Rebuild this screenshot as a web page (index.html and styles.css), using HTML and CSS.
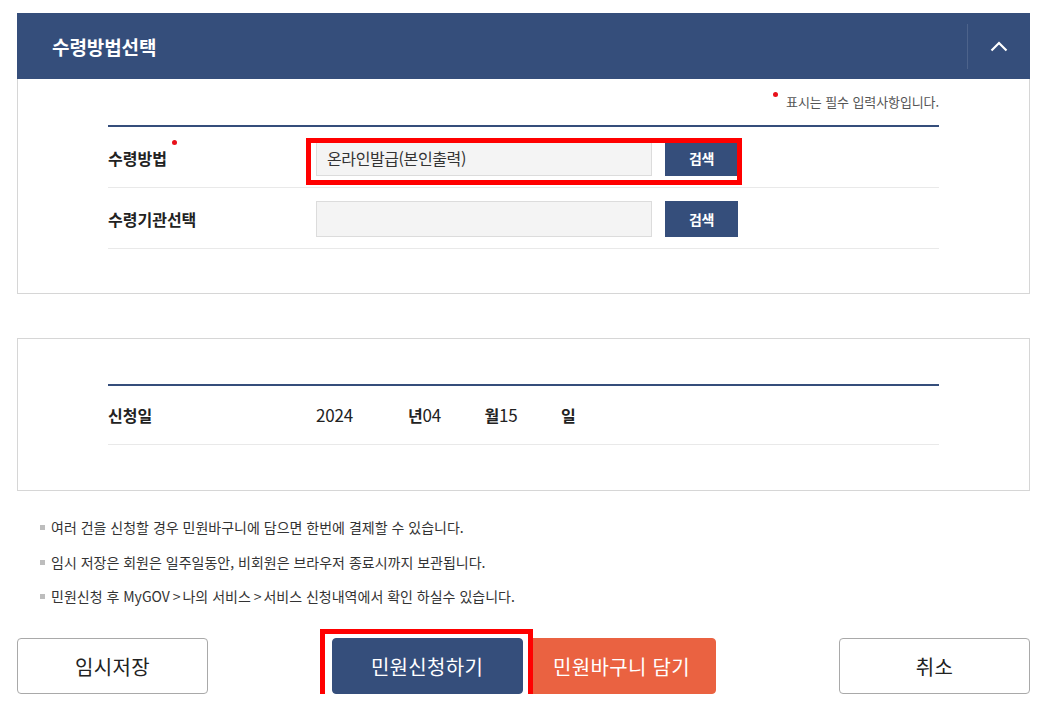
FILE: index.html
```html
<!DOCTYPE html>
<html lang="ko">
<head>
<meta charset="utf-8">
<title>수령방법선택</title>
<link rel="stylesheet" href="styles.css">
</head>
<body>
<div class="page">
  <section class="panel">
    <header class="panel-head">
      <h2 class="panel-title">수령방법선택</h2>
      <button class="toggle" type="button" aria-label="접기">
        <svg width="18" height="11" viewBox="0 0 18 11"><path d="M1.5 9.5 L9 2 L16.5 9.5" fill="none" stroke="#fff" stroke-width="2.2"/></svg>
      </button>
    </header>
    <div class="panel-body">
      <p class="req-note"><span class="dot"></span>표시는 필수 입력사항입니다.</p>
      <div class="form-table">
        <div class="form-row">
          <div class="label">수령방법<span class="req"></span></div>
          <div class="field highlight">
            <div class="input">온라인발급(본인출력)</div>
            <button class="btn-search" type="button">검색</button>
          </div>
        </div>
        <div class="form-row">
          <div class="label">수령기관선택</div>
          <div class="field">
            <div class="input"></div>
            <button class="btn-search" type="button">검색</button>
          </div>
        </div>
      </div>
    </div>
  </section>

  <section class="panel plain">
    <div class="panel-body date-body">
      <div class="form-table">
        <div class="form-row date-row">
          <div class="label">신청일</div>
          <div class="date">
            <span class="num n-year">2024</span><b>년</b><span class="num n-md">04</span><b>월</b><span class="num n-md">15</span><b>일</b>
          </div>
        </div>
      </div>
    </div>
  </section>

  <ul class="notes">
    <li>여러 건을 신청할 경우 민원바구니에 담으면 한번에 결제할 수 있습니다.</li>
    <li>임시 저장은 회원은 일주일동안, 비회원은 브라우저 종료시까지 보관됩니다.</li>
    <li>민원신청 후 MyGOV<span class="tight"> &gt; </span>나의 서비스<span class="tight"> &gt; </span>서비스 신청내역에서 확인 하실수 있습니다.</li>
  </ul>

  <div class="actions">
    <button class="btn btn-line" type="button">임시저장</button>
    <div class="center-btns">
      <button class="btn btn-navy highlight-btn" type="button">민원신청하기</button>
      <button class="btn btn-orange" type="button">민원바구니 담기</button>
    </div>
    <button class="btn btn-line" type="button">취소</button>
  </div>
</div>
</body>
</html>
```

FILE: styles.css
```css
* { box-sizing: border-box; }
html, body { margin: 0; padding: 0; background: #fff; }
body {
  font-family: "Noto Sans CJK KR", "Noto Sans", sans-serif;
  color: #222;
}
.page {
  margin: 13px 14px 0 17px;
}
.panel {
  border: 1px solid #d6d6d6;
  border-top: 0;
  background: #fff;
}
.panel.plain {
  border-top: 1px solid #d6d6d6;
  margin-top: 44px;
}
.panel-head {
  display: flex;
  align-items: center;
  justify-content: space-between;
  height: 66px;
  margin: 0 -1px;
  background: #354e7b;
  padding-left: 35px;
}
.panel-title {
  margin: 0;
  color: #fff;
  font-size: 19px;
  font-weight: 700;
  letter-spacing: -0.1px;
  line-height: 1;
}
.toggle {
  display: flex;
  align-items: center;
  justify-content: center;
  width: 63px;
  height: 45px;
  padding: 0;
  border: 0;
  border-left: 1px solid rgba(255,255,255,0.12);
  background: transparent;
  cursor: pointer;
}
.panel-body {
  padding: 13px 90px 44px;
}
.date-body {
  padding-top: 45px;
  padding-bottom: 45px;
}
.req-note {
  margin: 0 0 13px;
  text-align: right;
  font-size: 13px;
  line-height: 20px;
  color: #555;
  letter-spacing: -0.1px;
}
.req-note .dot {
  display: inline-block;
  width: 5px;
  height: 5px;
  border-radius: 50%;
  background: #e8101a;
  vertical-align: top;
  margin: 0 8px 0 0;
}
.form-table {
  border-top: 2px solid #354e7b;
}
.form-row {
  display: flex;
  align-items: center;
  padding: 13px 0 11px;
  border-bottom: 1px solid #e9e9e9;
}
.label {
  position: relative;
  width: 208px;
  flex: none;
  font-size: 16px;
  font-weight: 700;
  letter-spacing: 0;
  color: #222;
}
.label .req {
  display: inline-block;
  width: 5px;
  height: 5px;
  border-radius: 50%;
  background: #e8101a;
  vertical-align: top;
  margin: -6px 0 0 5px;
}
.field {
  position: relative;
  display: flex;
  align-items: stretch;
  gap: 13px;
}
.input {
  width: 336px;
  height: 36px;
  background: #f4f4f4;
  border: 1px solid #dcdcdc;
  padding: 0 10px;
  font-size: 16px;
  line-height: 34px;
  letter-spacing: -0.4px;
  color: #333;
}
.btn-search {
  width: 73px;
  height: 36px;
  border: 0;
  background: #354e7b;
  color: #fff;
  font-family: inherit;
  font-size: 14px;
  font-weight: 700;
  letter-spacing: -0.5px;
  padding: 0;
}
.highlight::after {
  content: "";
  position: absolute;
  left: -10px;
  top: -2px;
  right: -4px;
  bottom: -9px;
  border: 5px solid #ff0000;
  pointer-events: none;
}
.date-row {
  padding: 17px 0 17px;
}
.date {
  display: flex;
  align-items: center;
  font-size: 17px;
  letter-spacing: -0.2px;
  line-height: 24px;
}
.date b { font-weight: 700; font-size: 16px; }
.num { color: #222; }
.n-year { width: 92px; }
.n-md { width: 62px; }
.notes {
  list-style: none;
  margin: 26px 0 0;
  padding: 0 0 0 23px;
}
.notes li {
  position: relative;
  padding-left: 11px;
  font-size: 14px;
  line-height: 20px;
  letter-spacing: 0;
  color: #333;
  margin-bottom: 14.5px;
}
.notes .tight {
  letter-spacing: -1px;
}
.notes li::before {
  content: "";
  position: absolute;
  left: 0;
  top: 8px;
  width: 5px;
  height: 5px;
  background: #bdbdbd;
}
.actions {
  display: flex;
  justify-content: space-between;
  align-items: center;
  margin-top: 32px;
}
.center-btns {
  display: flex;
  gap: 5px;
}
.btn {
  height: 56px;
  width: 191px;
  border-radius: 4px;
  font-family: inherit;
  font-size: 20px;
  letter-spacing: 0.3px;
  padding: 0;
  cursor: pointer;
}
.btn-line {
  background: #fff;
  border: 1px solid #a9a9a9;
  color: #222;
}
.btn-navy {
  position: relative;
  background: #354e7b;
  border: 1px solid #354e7b;
  color: #fff;
}
.btn-orange {
  width: 188px;
  background: #ea6241;
  border: 1px solid #ea6241;
  color: #fff;
}
.highlight-btn::after {
  content: "";
  position: absolute;
  left: -13px;
  top: -10px;
  right: -11px;
  bottom: -9px;
  border: 5px solid #ff0000;
  pointer-events: none;
}
```
